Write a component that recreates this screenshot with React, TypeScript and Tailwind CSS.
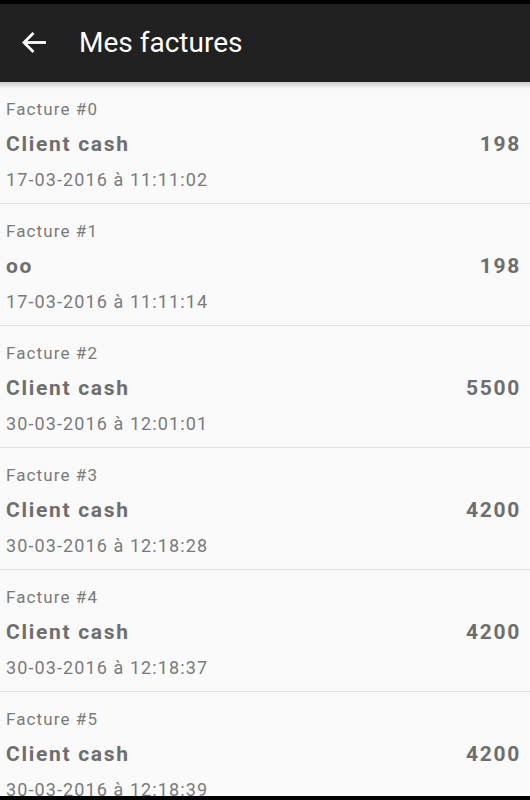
import React from "react";

const items = [
  { n: 0, client: "Client cash", amount: "198", date: "17-03-2016 à 11:11:02" },
  { n: 1, client: "oo", amount: "198", date: "17-03-2016 à 11:11:14" },
  { n: 2, client: "Client cash", amount: "5500", date: "30-03-2016 à 12:01:01" },
  { n: 3, client: "Client cash", amount: "4200", date: "30-03-2016 à 12:18:28" },
  { n: 4, client: "Client cash", amount: "4200", date: "30-03-2016 à 12:18:37" },
  { n: 5, client: "Client cash", amount: "4200", date: "30-03-2016 à 12:18:39" },
];

export default function App() {
  return (
    <div
      className="w-[530px] h-[800px] flex flex-col bg-[#fafafa] overflow-hidden"
      style={{ fontFamily: "Roboto, 'Noto Sans', sans-serif" }}
    >
      <div className="h-[4px] bg-black shrink-0" />
      <div className="relative h-[78px] shrink-0 bg-[#212121] flex items-center z-10">
        <svg className="ml-[21px] w-[26px] h-[24px]" viewBox="0 0 26 24" fill="none" stroke="#ffffff" strokeWidth="2.8">
          <path d="M3 11.5H25" />
          <path d="M12.5 2L3 11.5L12.5 21" strokeLinejoin="miter" />
        </svg>
        <div className="ml-[32px] text-white text-[28px] leading-none">Mes factures</div>
        <div className="absolute left-0 right-0 top-full h-[7px] bg-gradient-to-b from-[rgba(0,0,0,0.18)] to-transparent" />
      </div>
      <div className="flex-1 overflow-hidden">
        {items.map((it) => (
          <div
            key={it.n}
            className="h-[122px] border-b border-[#e2e2e2] pt-[15px] pl-[6px] pr-[9px] flex flex-col"
          >
            <div className="text-[17px] leading-[24px] text-[#7a7a7a] tracking-[1.1px]">Facture #{it.n}</div>
            <div className="flex justify-between items-center h-[48px]">
              <span className="text-[21px] font-bold text-[#6e6e6e] tracking-[1.7px]">{it.client}</span>
              <span className="text-[21px] font-bold text-[#6e6e6e] tracking-[1.7px]">{it.amount}</span>
            </div>
            <div className="text-[18px] leading-[22px] text-[#7a7a7a] tracking-[1.1px] whitespace-nowrap">{it.date}</div>
          </div>
        ))}
      </div>
      <div className="h-[4px] bg-black shrink-0" />
    </div>
  );
}
